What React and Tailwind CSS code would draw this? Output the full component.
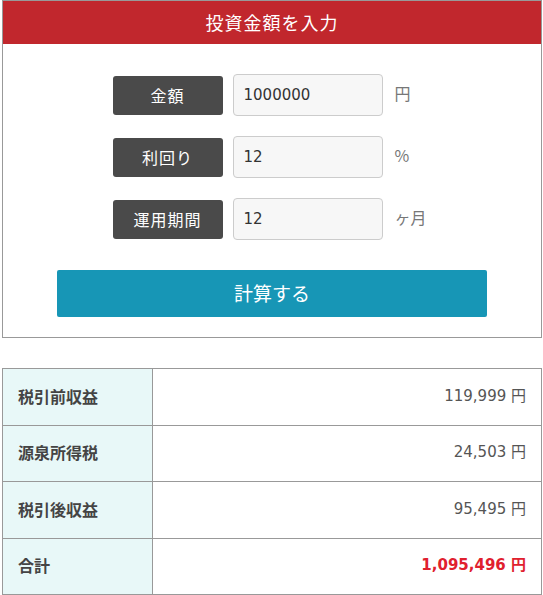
import React from 'react';

const inputs = [
  { label: '金額', value: '1000000', unit: '円' },
  { label: '利回り', value: '12', unit: '%' },
  { label: '運用期間', value: '12', unit: 'ヶ月' },
];

const results = [
  { label: '税引前収益', value: '119,999 円' },
  { label: '源泉所得税', value: '24,503 円' },
  { label: '税引後収益', value: '95,495 円' },
  { label: '合計', value: '1,095,496 円', total: true },
];

const jp = { fontFamily: '"Noto Sans CJK JP", "Noto Sans", sans-serif' };
const num = { fontFamily: '"DejaVu Sans", "Noto Sans CJK JP", sans-serif' };

const App = () => {
  return (
    <div className="w-[543px] bg-white pl-[2px] pr-[1px]" style={jp}>
      <div className="border border-[#999]">
        <div className="h-[43px] bg-[#c1272d] flex items-center justify-center text-white text-[18px] tracking-[1px]">
          投資金額を入力
        </div>

        <div className="pt-[30px] pb-[20px]">
          <div className="flex flex-col gap-[20px]">
            {inputs.map((row) => (
              <div key={row.label} className="flex items-center justify-center">
                <div className="w-[110px] h-[39px] rounded-[3px] bg-[#4a4a4a] text-white text-[16px] tracking-[1px] flex items-center justify-center">
                  {row.label}
                </div>
                <input
                  className="ml-[10px] w-[150px] h-[42px] rounded-[4px] border border-[#ccc] bg-[#f7f7f7] px-[10px] text-[15px] text-[#333] outline-none"
                  style={num}
                  defaultValue={row.value}
                />
                <span className="ml-[12px] w-[37px] pb-[4px] text-[16px] text-[#777]">{row.unit}</span>
              </div>
            ))}
          </div>

          <button className="mt-[30px] mx-auto block w-[430px] h-[47px] rounded-[2px] bg-[#1796b6] text-white text-[19px]">
            計算する
          </button>
        </div>
      </div>

      <div className="mt-[30px] border border-[#999] border-b-0">
        {results.map((row) => (
          <div key={row.label} className="flex h-[56.5px] border-b border-[#999]">
            <div className="w-[150px] shrink-0 bg-[#e8f8f8] border-r border-[#999] pl-[15px] pb-[2px] flex items-center text-[16px] font-bold text-[#444]">
              {row.label}
            </div>
            <div
              className={`flex-1 flex items-center justify-end pr-[15px] pb-[2px] text-[15px] ${
                row.total ? 'font-bold text-[#e0202e]' : 'text-[#555]'
              }`}
              style={num}
            >
              {row.value}
            </div>
          </div>
        ))}
      </div>
    </div>
  );
};

export default App;
